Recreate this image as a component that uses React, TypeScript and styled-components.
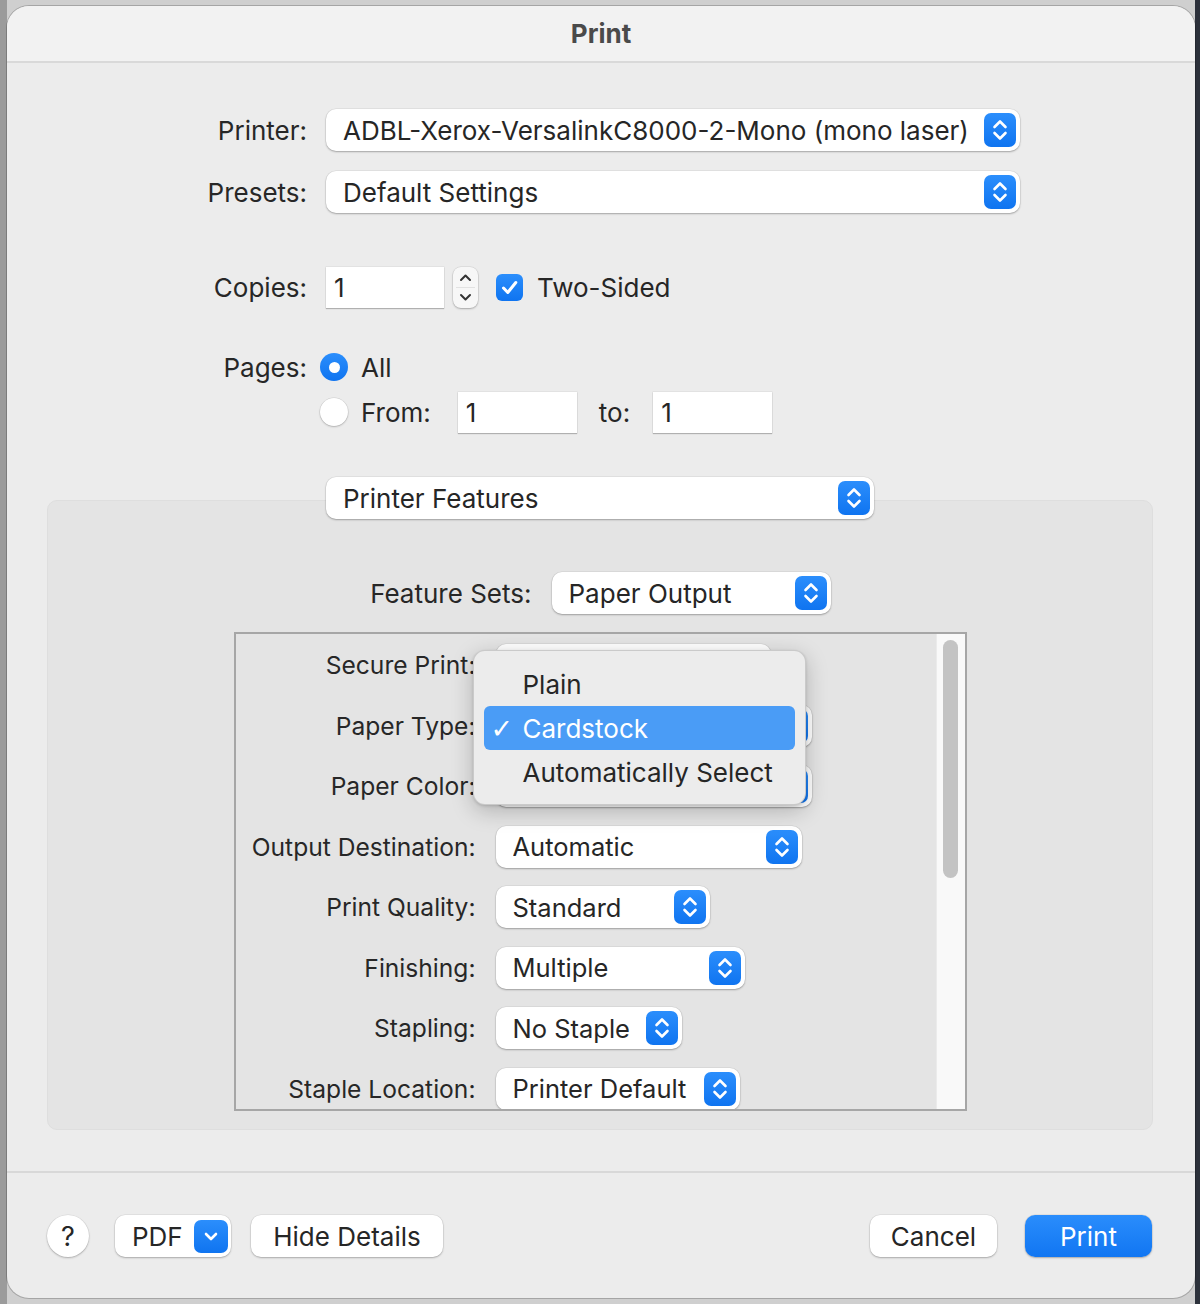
import styled, { createGlobalStyle } from "styled-components";

const Global = createGlobalStyle`
  html, body { margin: 0; padding: 0; }
  body {
    background: #c9c9c9;
    font-family: Inter, "Liberation Sans", sans-serif;
    color: #262626;
    -webkit-font-smoothing: antialiased;
  }
`;

const Desktop = styled.div`
  width: 1200px;
  height: 1304px;
  box-sizing: border-box;
  padding: 6px 5px 6px 7px;
  background: linear-gradient(90deg, #9b9b9b 0, #9b9b9b 7px, #cfcfcf 7px, #cfcfcf 1195px, #2c313b 1195px);
`;

const Window = styled.div`
  width: 1188px;
  height: 1292px;
  background: #ececec;
  border-radius: 22px;
  overflow: hidden;
  display: flex;
  flex-direction: column;
  box-shadow: 0 0 0 1px rgba(0, 0, 0, 0.2);
`;

const TitleBar = styled.div`
  height: 57px;
  flex: none;
  box-sizing: border-box;
  background: #f2f2f2;
  border-bottom: 2px solid #d9d9d9;
  display: flex;
  align-items: center;
  justify-content: center;
  font-size: 26px;
  font-weight: 700;
  color: #4a4a4a;
`;

const Main = styled.div`
  padding-top: 46px;
  display: flex;
  flex-direction: column;
`;

const FormRow = styled.div<{ $top?: number; $gap?: number }>`
  display: flex;
  align-items: center;
  height: 42px;
  margin-top: ${(p) => p.$top ?? 0}px;
  gap: ${(p) => p.$gap ?? 19}px;
  position: relative;
  z-index: 1;
`;

const Label = styled.div<{ $w?: number; $size?: number }>`
  width: ${(p) => p.$w ?? 300}px;
  flex: none;
  text-align: right;
  font-size: ${(p) => p.$size ?? 26}px;
  color: #272727;
  white-space: nowrap;
`;

const Popup = styled.div<{ $w: number; $size?: number }>`
  width: ${(p) => p.$w}px;
  height: 42px;
  flex: none;
  box-sizing: border-box;
  background: #fff;
  border-radius: 10px;
  box-shadow: 0 1px 2px rgba(0, 0, 0, 0.28), 0 0 0 0.5px rgba(0, 0, 0, 0.08);
  display: flex;
  align-items: center;
  padding: 0 4px 0 17px;
  font-size: ${(p) => p.$size ?? 26}px;
  color: #262626;
  white-space: nowrap;
`;

const PopupText = styled.span`
  flex: 1;
  overflow: hidden;
`;

const BlueKnob = styled.div<{ $h?: number; $w?: number }>`
  width: ${(p) => p.$w ?? 32}px;
  height: ${(p) => p.$h ?? 34}px;
  flex: none;
  border-radius: 7px;
  background: linear-gradient(#2b8efc, #0f74f0);
  display: flex;
  align-items: center;
  justify-content: center;
`;

const Stepper = () => (
  <BlueKnob>
    <svg width="32" height="34" viewBox="0 0 32 34">
      <path d="M10.5 14 L16 8.5 L21.5 14 M10.5 20 L16 25.5 L21.5 20" fill="none" stroke="#fff" strokeWidth="2.6" strokeLinecap="round" strokeLinejoin="round" />
    </svg>
  </BlueKnob>
);

const Select = ({ w, text, size, plain }: { w: number; text: string; size?: number; plain?: boolean }) => (
  <Popup $w={w} $size={size}>
    <PopupText>{text}</PopupText>
    {!plain && <Stepper />}
  </Popup>
);

const TextField = styled.div<{ $w: number }>`
  width: ${(p) => p.$w}px;
  height: 41px;
  flex: none;
  box-sizing: border-box;
  background: #fff;
  box-shadow: 0 1px 1px rgba(0, 0, 0, 0.22), 0 0 0 0.5px rgba(0, 0, 0, 0.08);
  display: flex;
  align-items: center;
  padding-left: 8px;
  font-size: 26px;
`;

const SmallStepper = styled.div`
  width: 25px;
  height: 41px;
  flex: none;
  box-sizing: border-box;
  background: #f7f7f7;
  border-radius: 8px;
  box-shadow: 0 1px 2px rgba(0, 0, 0, 0.25), 0 0 0 0.5px rgba(0, 0, 0, 0.1);
  display: flex;
  align-items: center;
  justify-content: center;
`;

const Checkbox = styled.div`
  width: 27px;
  height: 27px;
  flex: none;
  border-radius: 6px;
  background: linear-gradient(#2b8efc, #0f74f0);
  display: flex;
  align-items: center;
  justify-content: center;
`;

const Radio = styled.div<{ $on?: boolean }>`
  width: 28px;
  height: 28px;
  flex: none;
  box-sizing: border-box;
  border-radius: 50%;
  background: ${(p) => (p.$on ? "linear-gradient(#2b8efc, #0f74f0)" : "#fff")};
  box-shadow: ${(p) => (p.$on ? "none" : "0 1px 2px rgba(0,0,0,0.2), 0 0 0 0.5px rgba(0,0,0,0.12)")};
  display: flex;
  align-items: center;
  justify-content: center;
  &::after {
    content: "";
    display: ${(p) => (p.$on ? "block" : "none")};
    width: 11px;
    height: 11px;
    border-radius: 50%;
    background: #fff;
  }
`;

const Text = styled.span<{ $ml?: number }>`
  font-size: 26px;
  color: #262626;
  margin-left: ${(p) => p.$ml ?? 0}px;
  white-space: nowrap;
`;

const Group = styled.div`
  margin: -19px 42px 0 40px;
  height: 630px;
  box-sizing: border-box;
  background: #e4e4e4;
  border: 1px solid #dedede;
  border-radius: 10px;
  padding: 71px 0 18px;
  display: flex;
  flex-direction: column;
  align-items: center;
`;

const CenterRow = styled.div`
  display: flex;
  align-items: center;
  gap: 20px;
  height: 42px;
`;

const ScrollBox = styled.div`
  margin-top: 18px;
  width: 733px;
  height: 479px;
  box-sizing: border-box;
  border: 2px solid #a6a6a6;
  background: #e4e4e4;
  display: flex;
  position: relative;
`;

const ScrollContent = styled.div`
  flex: 1;
  overflow: hidden;
  padding-top: 10px;
  display: flex;
  flex-direction: column;
  gap: 18.5px;
`;

const SettingRow = styled.div`
  display: flex;
  align-items: center;
  gap: 20px;
  height: 42px;
  flex: none;
`;

const Track = styled.div`
  width: 29px;
  flex: none;
  background: #f9f9f9;
  border-left: 1px solid #ebebeb;
  box-sizing: border-box;
  padding: 6px 0 0 6px;
`;

const Thumb = styled.div`
  width: 15px;
  height: 238px;
  border-radius: 8px;
  background: #c3c3c3;
`;

const Menu = styled.div`
  position: absolute;
  left: 237px;
  top: 16px;
  width: 333px;
  height: 155px;
  box-sizing: border-box;
  padding-top: 11px;
  background: #ececec;
  border: 1px solid rgba(0, 0, 0, 0.14);
  border-radius: 12px;
  box-shadow: 0 6px 22px rgba(0, 0, 0, 0.22), 0 1px 3px rgba(0, 0, 0, 0.15);
  z-index: 5;
`;

const MenuItem = styled.div<{ $active?: boolean }>`
  height: 44px;
  margin: 0 10px;
  border-radius: 6px;
  box-sizing: border-box;
  padding-left: 39px;
  display: flex;
  align-items: center;
  position: relative;
  font-size: 26px;
  color: ${(p) => (p.$active ? "#fff" : "#262626")};
  background: ${(p) => (p.$active ? "#4a9cf6" : "transparent")};
`;

const Check = styled.span`
  position: absolute;
  left: 7px;
  font-size: 27px;
  font-weight: 700;
  font-family: "DejaVu Sans", sans-serif;
`;

const Separator = styled.div`
  margin-top: 41px;
  height: 2px;
  background: #d8d8d8;
`;

const Footer = styled.div`
  display: flex;
  align-items: center;
  padding: 42px 43px 0 40px;
`;

const Button = styled.div<{ $w: number; $primary?: boolean }>`
  width: ${(p) => p.$w}px;
  height: 42px;
  flex: none;
  box-sizing: border-box;
  border-radius: 10px;
  background: ${(p) => (p.$primary ? "linear-gradient(#2a8dfc, #1176f2)" : "#fff")};
  color: ${(p) => (p.$primary ? "#fff" : "#262626")};
  box-shadow: 0 1px 2px rgba(0, 0, 0, 0.25), 0 0 0 0.5px rgba(0, 0, 0, 0.08);
  display: flex;
  align-items: center;
  justify-content: center;
  font-size: 26px;
`;

const HelpButton = styled(Button)`
  border-radius: 50%;
  font-size: 27px;
`;

const PdfButton = styled(Button)`
  justify-content: space-between;
  padding: 0 3px 0 17px;
`;

const Spacer = styled.div`
  flex: 1;
`;

// values under the open menu are hidden in the screenshot
const settings = [
  { label: "Secure Print:", w: 275, text: "", plain: true },
  { label: "Paper Type:", w: 316, text: "" },
  { label: "Paper Color:", w: 316, text: "" },
  { label: "Output Destination:", w: 306, text: "Automatic" },
  { label: "Print Quality:", w: 214, text: "Standard" },
  { label: "Finishing:", w: 249, text: "Multiple" },
  { label: "Stapling:", w: 186, text: "No Staple" },
  { label: "Staple Location:", w: 244, text: "Printer Default" },
];

export default function App() {
  return (
    <Desktop>
      <Global />
      <Window>
        <TitleBar>Print</TitleBar>
        <Main>
          <FormRow>
            <Label>Printer:</Label>
            <Select w={694} text="ADBL-Xerox-VersalinkC8000-2-Mono (mono laser)" />
          </FormRow>
          <FormRow $top={20}>
            <Label>Presets:</Label>
            <Select w={694} text="Default Settings" />
          </FormRow>
          <FormRow $top={53} $gap={0}>
            <Label>Copies:</Label>
            <TextField $w={118} style={{ marginLeft: 19 }}>1</TextField>
            <SmallStepper style={{ marginLeft: 9 }}>
              <svg width="25" height="41" viewBox="0 0 25 41">
                <path d="M8 13 L12.5 8.5 L17 13 M8 28 L12.5 32.5 L17 28" fill="none" stroke="#333" strokeWidth="2" strokeLinecap="round" strokeLinejoin="round" />
                <path d="M3 20.5 H22" stroke="#e2e2e2" strokeWidth="1" />
              </svg>
            </SmallStepper>
            <Checkbox style={{ marginLeft: 18 }}>
              <svg width="27" height="27" viewBox="0 0 27 27">
                <path d="M7.5 14 L11.8 18.5 L19.8 8.5" fill="none" stroke="#fff" strokeWidth="3" strokeLinecap="round" strokeLinejoin="round" />
              </svg>
            </Checkbox>
            <Text $ml={14}>Two-Sided</Text>
          </FormRow>
          <FormRow $top={38} $gap={13}>
            <Label>Pages:</Label>
            <Radio $on />
            <Text>All</Text>
          </FormRow>
          <FormRow $top={3} $gap={0}>
            <Label />
            <Radio style={{ marginLeft: 13 }} />
            <Text $ml={13}>From:</Text>
            <TextField $w={119} style={{ marginLeft: 27 }}>1</TextField>
            <Text $ml={22}>to:</Text>
            <TextField $w={119} style={{ marginLeft: 23 }}>1</TextField>
          </FormRow>
          <FormRow $top={44}>
            <Label />
            <Select w={548} text="Printer Features" />
          </FormRow>
          <Group>
            <CenterRow>
              <Label $w={162}>Feature Sets:</Label>
              <Select w={279} text="Paper Output" />
            </CenterRow>
            <ScrollBox>
              <ScrollContent>
                {settings.map((s) => (
                  <SettingRow key={s.label}>
                    <Label $w={240} $size={24.6}>
                      {s.label}
                    </Label>
                    <Select w={s.w} text={s.text} size={25.5} plain={s.plain} />
                  </SettingRow>
                ))}
              </ScrollContent>
              <Track>
                <Thumb />
              </Track>
              <Menu>
                <MenuItem>Plain</MenuItem>
                <MenuItem $active>
                  <Check>✓</Check>Cardstock
                </MenuItem>
                <MenuItem>Automatically Select</MenuItem>
              </Menu>
            </ScrollBox>
          </Group>
          <Separator />
          <Footer>
            <HelpButton $w={42}>?</HelpButton>
            <PdfButton $w={116} style={{ marginLeft: 26 }}>
              <span>PDF</span>
              <BlueKnob $h={33} $w={34}>
                <svg width="34" height="33" viewBox="0 0 34 33">
                  <path d="M12 14 L17 19 L22 14" fill="none" stroke="#fff" strokeWidth="2.6" strokeLinecap="round" strokeLinejoin="round" />
                </svg>
              </BlueKnob>
            </PdfButton>
            <Button $w={192} style={{ marginLeft: 20 }}>Hide Details</Button>
            <Spacer />
            <Button $w={127}>Cancel</Button>
            <Button $w={127} $primary style={{ marginLeft: 28 }}>
              Print
            </Button>
          </Footer>
        </Main>
      </Window>
    </Desktop>
  );
}
